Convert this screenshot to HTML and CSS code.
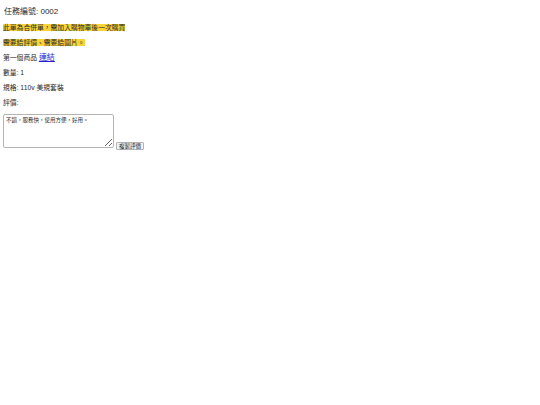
FILE: index.html
```html
<!DOCTYPE html>
<html>
<head>
<meta charset="utf-8">
<link rel="stylesheet" href="styles.css">
</head>
<body>
<div class="page">
  <div class="title">任務編號: 0002</div>
  <p class="line"><span class="hl">此單為合併單，需加入購物車後一次購買</span></p>
  <p class="line"><span class="hl">需要給評價、需要給圖片。</span></p>
  <p class="line">第一個商品 <a class="link" href="#">連結</a></p>
  <p class="line">數量: 1</p>
  <p class="line">規格: 110v 美規套裝</p>
  <p class="line">評價:</p>
  <div class="review"><textarea class="box">不錯，服務快，使用方便，好用。</textarea><button class="copy">複製評價</button></div>
</div>
</body>
</html>
```
FILE: styles.css
```css
html, body {
  margin: 0;
  padding: 0;
  background: #fff;
}
body {
  font-family: "Liberation Sans", "Noto Sans CJK TC", sans-serif;
  color: #2a2a2a;
}
.page {
  padding: 7px 3px;
}
.title {
  font-size: 8px;
  line-height: 10px;
  padding-left: 1px;
}
.line {
  font-size: 6.8px;
  line-height: 9px;
  margin: 6.2px 0 0;
}
.line:first-of-type {
  margin-top: 5.5px;
}
.hl {
  background: #f9d33a;
}
.link {
  color: #2a1fd0;
  font-size: 8px;
  text-decoration: underline;
}
.review {
  margin-top: 6.5px;
  display: flex;
  align-items: flex-end;
  gap: 2px;
}
.box {
  width: 111px;
  height: 34px;
  box-sizing: border-box;
  font-family: "Liberation Sans", "Noto Sans CJK TC", sans-serif;
  font-size: 5.5px;
  padding: 1px 2px;
  border: 1px solid #b5b5b5;
  border-radius: 2px;
  resize: both;
  margin: 0;
  color: #2a2a2a;
}
.copy {
  font-family: "Liberation Sans", "Noto Sans CJK TC", sans-serif;
  font-size: 5.5px;
  height: 8px;
  width: 28px;
  padding: 0;
  margin: 0 0 -2px;
  border: 1px solid #b5b5b5;
  background: #f0f0f0;
  border-radius: 1px;
  color: #2a2a2a;
  line-height: 6px;
}
```
